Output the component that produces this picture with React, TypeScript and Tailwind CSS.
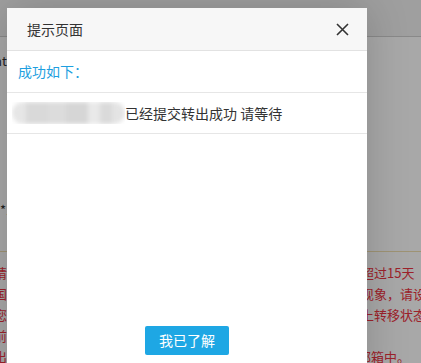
import React from 'react';

const redLines = [
  { left: '请', right: '超过15天' },
  { left: '国', right: '现象，请设' },
  { left: '您', right: '上转移状态' },
  { left: '前', right: '' },
  { left: '出', right: '邮箱中。' },
];

const BlurredName = () => (
  <div className="relative w-[113px] h-[22px] shrink-0 overflow-hidden">
    <div className="absolute inset-0 flex blur-[2px]">
      <div className="w-[14px] bg-[#e6e6e6] rounded-l-full" />
      <div className="w-[22px] bg-[#d9d9d9]" />
      <div className="w-[18px] bg-[#dcdcdc]" />
      <div className="w-[22px] bg-[#d6d6d6]" />
      <div className="w-[12px] bg-[#e9e9e9]" />
      <div className="w-[12px] bg-[#dadada]" />
      <div className="w-[13px] bg-[#e4e4e4] rounded-r-full" />
    </div>
  </div>
);

const App = () => {
  return (
    <div className="relative w-[421px] h-[363px] overflow-hidden bg-white font-['Noto_Sans_CJK_SC',_sans-serif] text-[#333]">
      {/* page underneath */}
      <div className="h-[37px] bg-[#f2f2f2] border-b border-[#d0d0d0]" />
      <div className="h-[33px] flex items-end text-[13px] -ml-[6px]">nt</div>
      <div className="h-[149px] flex items-end text-[13px]">*1</div>
      <div className="h-[32px]" />
      <div className="border-t border-[#f0e0b0] pt-[10px] text-[13px] leading-[21px] text-[#ee3442]">
        {redLines.map((line, i) => (
          <div key={i} className="flex whitespace-nowrap">
            <span className="w-[367px] shrink-0 -ml-[6px] overflow-hidden">{line.left}</span>
            <span className={i === 4 ? '-ml-[3px]' : ''}>{line.right}</span>
          </div>
        ))}
      </div>

      {/* overlay */}
      <div className="absolute inset-0 bg-black/[0.34]" />

      {/* dialog */}
      <div className="absolute left-[7px] top-[8px] w-[360px] h-[380px] bg-white shadow-[0_0_40px_rgba(0,0,0,0.18)] flex flex-col">
        <div className="h-[43px] bg-[#f7f7f7] border-b border-[#e2e2e2] flex items-center justify-between pl-[20px] pr-[18px] shrink-0">
          <span className="text-[14px] text-[#333]">提示页面</span>
          <svg width="13" height="13" viewBox="0 0 13 13" className="text-[#333]">
            <path d="M1 1 L12 12 M12 1 L1 12" stroke="currentColor" strokeWidth="1.6" />
          </svg>
        </div>
        <div className="h-[42px] border-b border-[#e6e6e6] flex items-center pl-[11px] text-[14px] text-[#1e9fe0] shrink-0">
          成功如下：
        </div>
        <div className="h-[41px] border-b border-[#e6e6e6] flex items-center pl-[5px] text-[14px] text-[#333] shrink-0">
          <BlurredName />
          <span className="whitespace-pre">已经提交转出成功 请等待</span>
        </div>
        <div className="flex justify-center pt-[192px]">
          <button className="w-[84px] h-[29px] rounded-[2px] bg-[#1ea7e4] text-white text-[14px]">
            我已了解
          </button>
        </div>
      </div>
    </div>
  );
};

export default App;
